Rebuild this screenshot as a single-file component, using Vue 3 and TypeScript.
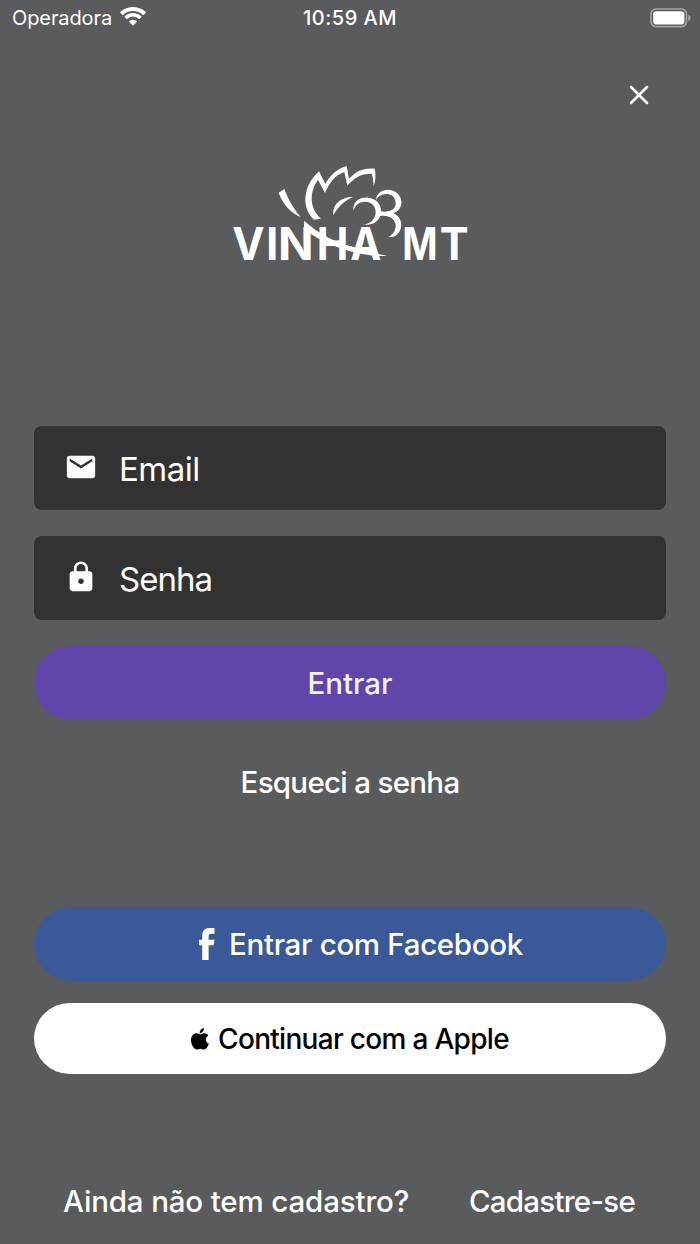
<template>
  <main class="login">
    <header class="status">
      <div class="status__carrier">
        <span class="status__name">Operadora</span>
        <svg class="status__wifi" viewBox="0 0 26 19" aria-hidden="true">
          <path d="M1.4 6.8A16.4 16.4 0 0 1 24.6 6.8" fill="none" stroke="currentColor" stroke-width="4" />
          <path d="M5.5 10.9A10.6 10.6 0 0 1 20.5 10.9" fill="none" stroke="currentColor" stroke-width="3.5" />
          <path d="M8.9 14.5A5.8 5.8 0 0 1 17.1 14.5L13 18.7Z" fill="currentColor" />
        </svg>
      </div>
      <span class="status__time">10:59 AM</span>
      <div class="status__power">
        <svg class="status__battery" viewBox="0 0 42 20" aria-hidden="true">
          <rect x="1" y="1" width="35.5" height="17.6" rx="5" fill="none" stroke="#a4a5a6" stroke-width="1.6" />
          <rect x="3.2" y="3.2" width="31.2" height="13.2" rx="2.8" fill="#fff" />
          <path d="M38.2 6.7Q40.7 7.5 40.7 9.8T38.2 12.9Z" fill="#a4a5a6" />
        </svg>
      </div>
    </header>

    <div class="toolbar">
      <button class="toolbar__close" type="button" aria-label="Fechar">
        <svg viewBox="0 0 20 20" aria-hidden="true">
          <path d="M2 2L18 18M18 2L2 18" fill="none" stroke="currentColor" stroke-width="2.6" stroke-linecap="round" />
        </svg>
      </button>
    </div>

    <svg class="logo" viewBox="0 0 780 360" role="img" aria-label="Vinha MT">
      <g class="logo__word">
        <text
          v-for="glyph in logoGlyphs"
          :key="glyph.char"
          :x="glyph.x"
          y="315"
          :textLength="glyph.width"
          lengthAdjust="spacingAndGlyphs"
        >{{ glyph.char }}</text>
      </g>
      <path d="M252 197C298 238 345 261 400 276C440 288 470 297 502 302C460 306 400 295 353 277C320 264 295 251 272 236L252 236Z" />
      <path d="M176 113L193 102C203 130 220 160 242 186C211 173 188 146 176 113Z" />
      <path d="M282 194C244 160 247 94 297 49L316 87C331 60 350 42 380 33L387 72C407 48 432 38 464 41C468 60 467 76 461 94C460 78 459 66 455 56C425 55 405 66 382 92L373 51C349 59 331 77 315 114L294 74C267 112 268 158 303 191Z" />
      <path d="M340 180C337 149 362 125 400 126C374 136 357 153 340 180Z" />
      <path d="M400 167C398 139 420 126 444 128C476 131 487 157 482 178C477 201 457 212 431 209C453 205 467 191 467 170C466 150 451 139 434 140C416 141 406 150 400 167Z" />
      <path d="M468 135C470 113 490 102 511 105C535 109 547 130 544 148C541 162 532 171 520 174C541 184 547 205 542 221C536 239 522 248 505 246C521 237 528 224 527 209C524 190 507 179 478 183L480 169C506 173 527 166 527 145C527 127 514 116 498 117C483 118 474 125 468 135Z" />
    </svg>

    <form class="form" @submit.prevent>
      <label class="field">
        <svg class="field__icon" viewBox="0 0 24 24" aria-hidden="true">
          <path d="M20 4H4c-1.100 0-1.990.9-1.990 2L2 18c0 1.100.9 2 2 2h16c1.100 0 2-.9 2-2V6c0-1.100-.9-2-2-2zm0 4l-8 5-8-5V6l8 5 8-5v2z" />
        </svg>
        <input v-model="email" class="field__input field__input--email" type="email" placeholder="Email" />
      </label>
      <label class="field">
        <svg class="field__icon" viewBox="0 0 24 24" aria-hidden="true">
          <path d="M18 8h-1V6c0-2.760-2.240-5-5-5S7 3.240 7 6v2H6c-1.100 0-2 .9-2 2v10c0 1.100.9 2 2 2h12c1.100 0 2-.9 2-2V10c0-1.100-.9-2-2-2zm-6 9c-1.100 0-2-.9-2-2s.9-2 2-2 2 .9 2 2-.9 2-2 2zm3.100-9H8.900V6c0-1.710 1.390-3.100 3.100-3.100s3.100 1.390 3.100 3.100v2z" />
        </svg>
        <input v-model="password" class="field__input" type="password" placeholder="Senha" />
      </label>
      <button class="button button--primary" type="submit">Entrar</button>
    </form>

    <button class="link link--forgot" type="button">Esqueci a senha</button>

    <section class="social">
      <button class="button button--facebook" type="button">
        <svg class="button__facebook" viewBox="0 0 16 32" aria-hidden="true">
          <path d="M3.200 32V17.300H0V11.800H3.200V8.200C3.200 2.600 5.800 0 11 0H15.500V5.700H12.200C10.100 5.700 9.600 6.700 9.600 8.500V11.800H15.400L14.700 17.300H9.600V32Z" />
        </svg>
        <span>Entrar com Facebook</span>
      </button>
      <button class="button button--apple" type="button">
        <svg class="button__apple" viewBox="0 0 18 22" aria-hidden="true">
          <path d="M12.900 0C13 2.900 11 5.200 8.700 5.200C8.500 2.600 10.700.3 12.900 0ZM9.200 6.400C10.200 6.400 11.400 5.200 13.200 5.200C15 5.200 16.500 6.100 17.300 7.400C13.700 9.500 14.300 14.300 17.900 15.700C16.900 18.500 15 21.500 12.900 21.500C11.600 21.500 11 20.700 9.400 20.700C7.800 20.700 7.100 21.500 5.800 21.500C3.300 21.500 0 16.700 0 12.200C0 7.900 2.700 5.300 5.600 5.300C7.200 5.300 8.400 6.400 9.200 6.400Z" />
        </svg>
        <span>Continuar com a Apple</span>
      </button>
    </section>

    <footer class="signup">
      <span class="signup__question">Ainda não tem cadastro?</span>
      <button class="link link--signup" type="button">Cadastre-se</button>
    </footer>
  </main>
</template>

<script setup lang="ts">
import { ref } from 'vue'

interface LogoGlyph {
  char: string
  x: number
  width: number
}

const email = ref('')
const password = ref('')

const logoGlyphs: LogoGlyph[] = [
  { char: 'V', x: 37, width: 97 },
  { char: 'I', x: 139, width: 36 },
  { char: 'N', x: 174, width: 107 },
  { char: 'H', x: 290, width: 95 },
  { char: 'A', x: 391, width: 93 },
  { char: 'M', x: 547, width: 106 },
  { char: 'T', x: 659, width: 87 }
]
</script>

<style>
body {
  margin: 0;
  background: #5a5b5d;
}
</style>

<style scoped>
.login {
  display: flex;
  flex-direction: column;
  box-sizing: border-box;
  height: 1244px;
  padding: 0 34px;
  overflow: hidden;
  background: #5a5b5d;
  color: #fff;
  font-family: Inter, 'Liberation Sans', sans-serif;
}

button {
  padding: 0;
  border: 0;
  background: none;
  color: inherit;
  font: inherit;
}

.status {
  display: grid;
  grid-template-columns: 1fr auto 1fr;
  align-items: center;
  height: 36px;
  margin: 0 -22px;
  font-size: 20px;
  line-height: 36px;
}

.status__carrier {
  display: flex;
  align-items: center;
  gap: 8px;
}

.status__name {
  letter-spacing: -0.1px;
}

.status__wifi {
  width: 26px;
  height: 19px;
  margin-top: -3px;
}

.status__time {
  font-weight: 500;
  letter-spacing: 0.5px;
}

.status__power {
  display: flex;
  justify-content: flex-end;
}

.status__battery {
  width: 42px;
  height: 20px;
  margin: -1px -4px 0 0;
}

.toolbar {
  display: flex;
  justify-content: flex-end;
  padding: 49px 17px 0 0;
}

.toolbar__close,
.toolbar__close svg {
  display: block;
  width: 20px;
  height: 20px;
}

.logo {
  align-self: center;
  flex: none;
  width: 260px;
  height: 120px;
  margin-top: 50px;
  fill: #fff;
}

.logo__word {
  font-size: 135px;
  font-weight: 700;
}

.form {
  display: flex;
  flex-direction: column;
  gap: 26px;
  margin-top: 151px;
}

.field {
  display: flex;
  align-items: center;
  box-sizing: border-box;
  height: 84px;
  padding: 0 30px;
  border-radius: 8px;
  background: #323232;
}

.field__icon {
  flex: none;
  width: 34px;
  height: 34px;
  margin: -3px 20px 0 0;
  fill: #fff;
}

.field__input {
  flex: 1;
  min-width: 0;
  height: 60px;
  padding: 1px 0 0 1px;
  border: 0;
  outline: 0;
  background: none;
  color: #fff;
  font-family: inherit;
  font-size: 33px;
  letter-spacing: -1px;
}

.field__input--email {
  letter-spacing: -0.5px;
}

.field__input::placeholder {
  color: #fff;
  opacity: 1;
}

.button {
  display: flex;
  align-items: center;
  justify-content: center;
  height: 74px;
  border-radius: 37px;
  font-size: 29.5px;
  font-weight: 500;
}

.button--primary {
  background: #6046a8;
  color: #f5f1fa;
}

.link {
  font-size: 29.5px;
  font-weight: 500;
  line-height: 40px;
}

.link--forgot {
  align-self: center;
  margin-top: 42px;
  letter-spacing: -0.7px;
}

.social {
  display: flex;
  flex-direction: column;
  gap: 22px;
  margin-top: 105px;
}

.button--facebook {
  gap: 14px;
  padding-left: 22px;
  letter-spacing: -0.32px;
}

.button--facebook {
  background: #3b5998;
}

.button__facebook {
  width: 16px;
  height: 32px;
  fill: #fff;
}

.button--apple {
  gap: 9px;
  height: 71px;
  background: #fff;
  color: #000;
  font-size: 28px;
  letter-spacing: -0.7px;
}

.button__apple {
  width: 18px;
  height: 22px;
  fill: #000;
}

.signup {
  display: flex;
  justify-content: space-between;
  margin-top: 107px;
  padding: 0 31px 0 29px;
  font-size: 29.5px;
  font-weight: 500;
  line-height: 40px;
}

.signup__question {
  letter-spacing: -0.15px;
}

.link--signup {
  letter-spacing: -0.75px;
}
</style>
